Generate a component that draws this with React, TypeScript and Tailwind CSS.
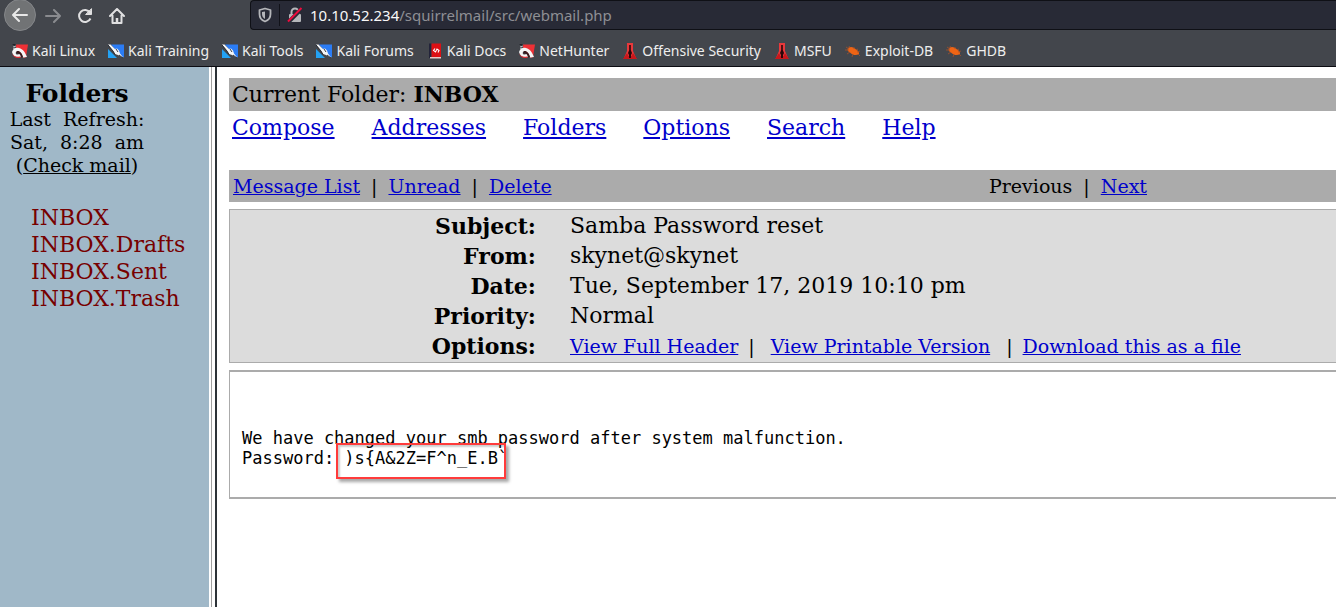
import type { ReactNode } from "react";

type IconKind = "dragon" | "knife" | "book" | "offsec" | "bug";

const bookmarks: { label: string; icon: IconKind }[] = [
  { label: "Kali Linux", icon: "dragon" },
  { label: "Kali Training", icon: "knife" },
  { label: "Kali Tools", icon: "knife" },
  { label: "Kali Forums", icon: "knife" },
  { label: "Kali Docs", icon: "book" },
  { label: "NetHunter", icon: "dragon" },
  { label: "Offensive Security", icon: "offsec" },
  { label: "MSFU", icon: "offsec" },
  { label: "Exploit-DB", icon: "bug" },
  { label: "GHDB", icon: "bug" },
];

const folders = ["INBOX", "INBOX.Drafts", "INBOX.Sent", "INBOX.Trash"];
const menu = ["Compose", "Addresses", "Folders", "Options", "Search", "Help"];
const details = [
  ["Subject:", "Samba Password reset"],
  ["From:", "skynet@skynet"],
  ["Date:", "Tue, September 17, 2019 10:10 pm"],
  ["Priority:", "Normal"],
];

function BookmarkIcon({ kind }: { kind: IconKind }) {
  return (
    <svg viewBox="0 0 16 16" className="size-4 shrink-0" aria-hidden="true">
      {kind === "dragon" && (
        <>
          <path d="M4 1.500h12L14 14l-2 1L4 5z" fill="#ee3035" />
          <path d="M0 1h3l1.500 2L2 2.500z" fill="#202329" />
          <path d="M0 9C1 5.500 4 4 7 5c4 1 6 4 8 9l-4 .5C10 10 7 7.500 5 8.500c-2 .8-1.500 3 .5 3L8 11l1 2.500C6 15.500 1 14 0 9z" fill="#f5f5f5" />
          <path d="M4.500 8.500C7 7 10 10 11 14l-2 .5c0-3-2-4.500-4.500-4z" fill="#3a1a1d" />
          <path d="M0 10c1 3 4 4.500 8 3.500l1 1C5 16 1 14.500 0 10z" fill="#e02a30" />
          <path d="M1 4l3-1M1 6l2-1" stroke="#d8dade" strokeWidth="0.8" />
        </>
      )}
      {kind === "knife" && (
        <>
          <path d="M3 1.500h13V14l-2 .5z" fill="#2b7cf5" />
          <path d="M0 6l9 9H0z" fill="#23a2f4" />
          <path d="M0 1.500h2.500L7 6l2-.5 2 2 1 3 3.500 4.500-5.500-3-3-1L5 8z" fill="#f4f6f8" />
          <path d="M0 2l5 6 2 3.500M8 6l2 3M11 12l4 3" fill="none" stroke="#20242b" strokeWidth="0.9" />
        </>
      )}
      {kind === "book" && (
        <>
          <path d="M2 .5h2.500V15H2z" fill="#23243a" />
          <path d="M4.500 .5H14V14H4.500z" fill="#dc1014" />
          <path d="M3 14h11v1.500H3z" fill="#e8c9c7" />
          <path d="M8 5.500L6.500 7.500 8.500 9l1.500-3 2 1.500-1 2" fill="none" stroke="#fff" strokeWidth="1.100" />
        </>
      )}
      {kind === "offsec" && (
        <>
          <path d="M5 0h6v8l3.500 8h-13L5 8z" fill="#e8383b" />
          <path d="M1 16l4-6 1.500 3h3L11 10l4 6z" fill="#c8171b" />
          <path d="M7.200 2h1.600v5L10 10l-1 2v3H7v-3l-1-2 1.200-3z" fill="#2a0709" />
        </>
      )}
      {kind === "bug" && (
        <>
          <path d="M3 5c3-2 6-.5 8 1.500 2 1 3 2.500 3 4.500-3 2-7 1-9-1.500C3 8.500 2 7 3 5z" fill="#ee6414" />
          <path d="M0 7h4M4 3l1 2M9 4v2M13 6l-2 1M12 9l3-1M13 11l2 2M5 9l-3 2M8 11l-1 3M1 4l3 2" stroke="#a5512a" strokeWidth="0.8" />
        </>
      )}
    </svg>
  );
}

function ToolButton({ label, children }: { label: string; children: ReactNode }) {
  return (
    <button type="button" aria-label={label} className="flex size-8 items-center justify-center text-[#e0e0e1]">
      <svg viewBox="0 0 16 16" className="size-4" fill="none" stroke="currentColor" strokeWidth="2" strokeLinecap="round" strokeLinejoin="round">
        {children}
      </svg>
    </button>
  );
}

function Link({ children }: { children: ReactNode }) {
  return (
    <a href="#" className="text-[#0000cc] underline">
      {children}
    </a>
  );
}

function BrowserBar() {
  return (
    <header className="border-b border-[#0c0c12] bg-[#43464c] font-['Noto_Sans',sans-serif]">
      <div className="flex h-[31px] items-start">
        <nav aria-label="Browser" className="flex w-[250px] shrink-0 pl-1">
          <button type="button" aria-label="Back" className="-mt-px mr-px flex size-8 items-center justify-center rounded-full border border-[#85878a] bg-[#717375] text-[#e8e8e8]">
            <svg viewBox="0 0 16 16" className="size-4" fill="none" stroke="currentColor" strokeWidth="2" strokeLinecap="round" strokeLinejoin="round">
              <path d="M15 8H1M7 2L1 8l6 6" />
            </svg>
          </button>
          <div className="text-[#e0e0e1] opacity-45">
            <ToolButton label="Forward">
              <path d="M1 8h14M9 2l6 6-6 6" />
            </ToolButton>
          </div>
          <ToolButton label="Reload">
            <path d="M13 4.500A6 6 0 1 0 13.500 10.500" strokeLinecap="butt" />
            <path d="M14.500 1v5.500H9z" fill="currentColor" strokeWidth="1" />
          </ToolButton>
          <ToolButton label="Home">
            <path d="M1 8l7-7 7 7M3.500 7.500V15h9V7.500" />
            <path d="M8 10v5" strokeWidth="2.500" strokeLinecap="butt" />
          </ToolButton>
        </nav>
        <div className="flex h-[30px] flex-1 items-center rounded-l border border-r-0 border-[#0f1016] bg-[#282a36]">
          <svg viewBox="0 0 16 16" className="mx-1.5 size-4" fill="none" stroke="#b5b6ba" strokeWidth="1.800" strokeLinejoin="round" aria-hidden="true">
            <path d="M8 1.500L13.500 3v4c0 4-2.500 6.500-5.500 7.500C5 13.500 2.500 11 2.500 7V3z" />
            <path d="M8 4.500V12c-2-1-3-3-3-5V5z" fill="#b5b6ba" stroke="none" />
          </svg>
          <span className="h-[22px] w-px bg-[#111219]" />
          <svg viewBox="0 0 16 16" className="mx-[7px] size-4" fill="none" aria-hidden="true">
            <path d="M4.500 8V5a3.500 3.500 0 0 1 7 0v3" stroke="#b5b6ba" strokeWidth="2" />
            <rect x="2" y="7" width="12" height="8" rx="1" fill="#b5b6ba" />
            <path d="M1 15.500L15 1.500" stroke="#282a36" strokeWidth="4" />
            <path d="M1 14.500L14.500 1" stroke="#ed0b3d" strokeWidth="2" />
          </svg>
          <div className="text-[15px] whitespace-nowrap text-[#f8f8f8]">
            10.10.52.234<span className="text-[#8e8f94]">/squirrelmail/src/webmail.php</span>
          </div>
        </div>
      </div>
      <nav aria-label="Bookmarks" className="flex h-[35px] items-center gap-[13px] pt-1 pl-3">
        {bookmarks.map((b) => (
          <a key={b.label} href="#" className="flex items-center gap-1 text-[14px] whitespace-nowrap text-[#eeeeee]">
            <BookmarkIcon kind={b.icon} />
            {b.label}
          </a>
        ))}
      </nav>
    </header>
  );
}

function Sidebar() {
  return (
    <aside className="w-[209px] shrink-0 bg-[#a0b8c8] pt-3">
      <div className="w-[154px] text-center text-[19px] leading-[23px]">
        <h2 className="text-[25px] leading-[29px] font-bold">Folders</h2>
        <p>Last&nbsp; Refresh:</p>
        <p>Sat,&nbsp; 8:28&nbsp; am</p>
        <p>
          (<a href="#" className="underline">Check mail</a>)
        </p>
      </div>
      <ul className="pt-[27px] pl-[31px] text-[22px] leading-[27px]">
        {folders.map((f) => (
          <li key={f}>
            <a href="#" className="text-[#770000]">{f}</a>
          </li>
        ))}
      </ul>
    </aside>
  );
}

export default function App() {
  return (
    <div className="flex min-h-screen flex-col bg-white font-['DejaVu_Serif',serif] text-black">
      <BrowserBar />
      <div className="flex flex-1">
        <Sidebar />
        <div className="flex w-2 shrink-0 border-r-2 border-[#2d3338] bg-white pl-0.5">
          <span className="w-px bg-[#a0a0a0]" />
        </div>
        <main className="min-w-0 flex-1 pt-[11px] pl-3">
          <h1 className="bg-[#ababab] pl-[3px] text-[22px] leading-[33px]">
            Current Folder: <b>INBOX</b>
          </h1>
          <nav aria-label="Mail" className="flex gap-[37px] pl-[3px] text-[22px] leading-[33px]">
            {menu.map((m) => (
              <Link key={m}>{m}</Link>
            ))}
          </nav>
          <div className="mt-[26px] flex justify-between bg-[#ababab] pr-[189px] pl-1 text-[19px] leading-8">
            <div className="flex gap-[11px]">
              <Link>Message List</Link>|<Link>Unread</Link>|<Link>Delete</Link>
            </div>
            <div className="flex gap-[11px]">
              <span>Previous</span>|<Link>Next</Link>
            </div>
          </div>
          <div className="mt-[7px] border border-r-0 border-[#ababab] bg-[#dcdcdc] pt-px pb-px">
            <table className="w-full text-[22px] leading-[30px]">
              <tbody>
                {details.map(([label, value]) => (
                  <tr key={label}>
                    <th scope="row" className="w-[306px] p-0 text-right font-bold">{label}</th>
                    <td className="py-0 pr-0 pl-[34px]">{value}</td>
                  </tr>
                ))}
                <tr>
                  <th scope="row" className="p-0 text-right font-bold">Options:</th>
                  <td className="py-0 pr-0 pl-[34px]">
                    <div className="flex text-[19px] whitespace-nowrap">
                      <Link>View Full Header</Link>
                      <span className="pr-4 pl-2.5">|</span>
                      <Link>View Printable Version</Link>
                      <span className="pr-2.5 pl-4">|</span>
                      <Link>Download this as a file</Link>
                    </div>
                  </td>
                </tr>
              </tbody>
            </table>
          </div>
          <div className="mt-[7px] border-y-2 border-l border-[#ababab] pt-14 pb-[29px] pl-3">
            <div className="relative font-['DejaVu_Sans_Mono',monospace] text-[17px] leading-5">
              <p>We have changed your smb password after system malfunction.</p>
              <p>Password: )s&#123;A&amp;2Z=F^n_E.B`</p>
              <span className="absolute top-[15px] left-[94px] h-9 w-[170px] border-2 border-[#ff3b3b] shadow-[3px_3px_3px_rgba(0,0,0,0.35),inset_2px_2px_2px_rgba(0,0,0,0.2)]" />
            </div>
          </div>
        </main>
      </div>
    </div>
  );
}
